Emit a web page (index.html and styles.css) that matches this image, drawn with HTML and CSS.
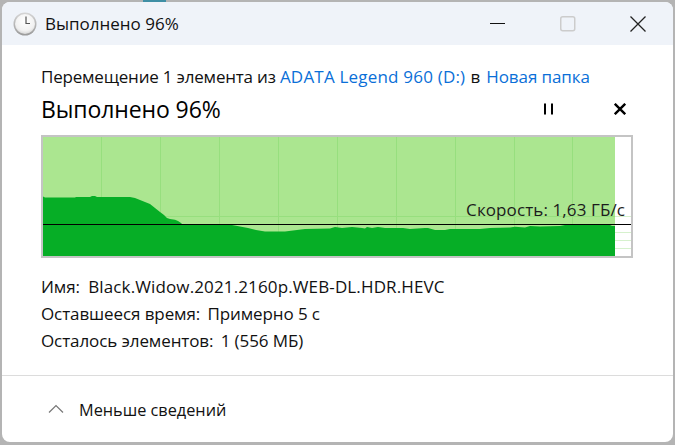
FILE: index.html
```html
<!DOCTYPE html>
<html lang="ru">
    <head>
        <meta charset="utf-8">
        <link rel="stylesheet" href="styles.css">
        <title>Выполнено 96%</title>
    </head>
    <body>
        <div class="window">

            <div class="titlebar">
                <svg class="clock" width="24" height="24" viewBox="0 0 24 24">
                    <defs>
                        <linearGradient id="rim" x1="0" y1="0" x2="0" y2="1">
                            <stop offset="0" stop-color="#d6d6d6"/>
                            <stop offset="1" stop-color="#9a9a9a"/>
                        </linearGradient>
                        <radialGradient id="face" cx="0.5" cy="0.35" r="0.7">
                            <stop offset="0" stop-color="#ffffff"/>
                            <stop offset="0.7" stop-color="#f1f1f1"/>
                            <stop offset="1" stop-color="#cfcfcf"/>
                        </radialGradient>
                    </defs>
                    <circle cx="12" cy="12" r="11.5" fill="url(#rim)"/>
                    <circle cx="12" cy="12" r="10" fill="url(#face)"/>
                    <path d="M13 4.5V11.5H17" fill="none" stroke="#555" stroke-width="1.2"/>
                </svg>
                <span class="title">Выполнено 96%</span>
                <div class="controls">
                    <svg width="16" height="16" viewBox="0 0 16 16"><path d="M0 7.5H15" stroke="#111" stroke-width="1"/></svg>
                    <svg width="16" height="16" viewBox="0 0 16 16"><rect x="0.75" y="0.75" width="14" height="14" rx="2" fill="none" stroke="#cccccc" stroke-width="1.5"/></svg>
                    <svg width="16" height="16" viewBox="0 0 16 16"><path d="M0.5 0.5L15.5 15.5M15.5 0.5L0.5 15.5" stroke="#222" stroke-width="1.3"/></svg>
                </div>
            </div>

            <div class="content">
                <p class="from-to">Перемещение 1 элемента из <span class="link latin">ADATA Legend 960 (D:)</span> в <span class="link">Новая папка</span></p>

                <div class="progress-head">
                    <h1>Выполнено 96%</h1>
                    <div class="actions">
                        <svg width="12" height="12" viewBox="0 0 12 12"><path d="M3 0.5V11.5M10 0.5V11.5" stroke="#000" stroke-width="2"/></svg>
                        <svg width="12" height="12" viewBox="0 0 12 12"><path d="M0.8 0.8L11.2 11.2M11.2 0.8L0.8 11.2" stroke="#000" stroke-width="2.4"/></svg>
                    </div>
                </div>

                <div class="chart">
                    <svg width="588" height="119" viewBox="43 137 588 119">
                        <rect x="43" y="137" width="572" height="119" fill="#abe690"/>
                        <path class="grid" d="M101.5 137V256M160.5 137V256M219.5 137V256M278.5 137V256M337.5 137V256M396.5 137V256M455.5 137V256M514.5 137V256M572.5 137V256M43 216.5H615"/>
                        <path class="grid-empty" d="M615 216.5H631M615 232.5H631M615 240.5H631M615 248.5H631"/>
                        <path class="speed" d="M43 196.5L45 197.5H75L76 197H90L92 196H95L97 197H130L135 198L140 200L145 202L150 204L155 208L160 212L164 215L167 218L170 219L175 219.7L178 221L181 223L183 225H232L240 226.5L248 228L256 230L265 231.5H285L297 230L305 229L330 228.5L335 227L342 228L352 227L362 228L365 228.5L367 227L372 228L378 227L385 228H403L410 229L425 228L428 228L435 230H445L450 229H480L490 228L510 227.5L515 226.7L525 227.5L530 226L540 226.5L560 226L565 225H610L612 226H615V256H43Z"/>
                        <path d="M43 224.5H631" stroke="#000" stroke-width="1"/>
                    </svg>
                    <span class="speed-label">Скорость: 1,63 ГБ/с</span>
                </div>

                <ul class="details">
                    <li>Имя: <span class="value latin">Black.Widow.2021.2160p.WEB-DL.HDR.HEVC</span></li>
                    <li>Оставшееся время: <span class="value">Примерно 5 с</span></li>
                    <li>Осталось элементов: <span class="value">1 (556 МБ)</span></li>
                </ul>
            </div>

            <div class="footer">
                <svg width="16" height="10" viewBox="0 0 16 10"><path d="M1 8.5L8 1.5L15 8.5" fill="none" stroke="#777" stroke-width="1.2"/></svg>
                <span>Меньше сведений</span>
            </div>

        </div>
    </body>
</html>
```

FILE: styles.css
```css
html, body {
    margin: 0;
    height: 445px;
    overflow: hidden;
}

body {
    font-family: "Open Sans", "Noto Sans", sans-serif;
    font-size: 17px;
    color: #111;
    background-color: #b4b4b4;
    background-image: linear-gradient(#3f8fa5, #3f8fa5);
    background-size: 23px 2px;
    background-position: 143px 0;
    background-repeat: no-repeat;
}

.window {
    box-sizing: border-box;
    width: 671px;
    height: 440px;
    margin: 2px 0 0 2px;
    display: flex;
    flex-direction: column;
    background: #ffffff;
    border-radius: 8px;
    overflow: hidden;
}

.titlebar {
    height: 43px;
    flex: none;
    display: flex;
    align-items: center;
    background: #eff3f9;
}

.clock {
    margin-left: 11px;
}

.title {
    margin-left: 8px;
}

.controls {
    margin-left: auto;
    margin-right: 27px;
    display: flex;
    gap: 54px;
}

.content {
    flex: 1;
    padding: 0 40px 0 39px;
}

.from-to {
    margin: 21px 0 0 0;
    line-height: 22px;
    letter-spacing: -0.2px;
    white-space: nowrap;
}

.link {
    color: #0a6fd8;
    letter-spacing: -0.1px;
}

.link.latin {
    margin-right: 1px;
    letter-spacing: 0.2px;
}

.link.latin + .link {
    margin-left: 2px;
}

.progress-head {
    display: flex;
    align-items: center;
    justify-content: space-between;
    height: 33px;
    margin-top: 4px;
}

h1 {
    margin: 0;
    font-size: 23px;
    font-weight: normal;
    letter-spacing: -0.1px;
    color: #000;
}

.actions {
    display: flex;
    gap: 60px;
    margin-right: 7px;
}

.chart {
    position: relative;
    width: 588px;
    height: 119px;
    margin: 10px 0 0 0;
    border: 2px solid #c4c4c4;
}

.chart svg {
    display: block;
}

.grid {
    fill: none;
    stroke: #97df7e;
    stroke-width: 1;
}

.grid-empty {
    fill: none;
    stroke: #d6f1cd;
    stroke-width: 1;
}

.speed {
    fill: #06ae26;
}

.speed-label {
    position: absolute;
    right: 6px;
    top: 62px;
    line-height: 22px;
    letter-spacing: 0.1px;
    color: #1c1c1c;
}

.details {
    list-style: none;
    margin: 15px 0 0 0;
    padding: 0;
}

.details li {
    height: 27px;
    line-height: 27px;
    letter-spacing: -0.1px;
}

.value {
    margin-left: 3px;
}

.value.latin {
    margin-left: 4px;
    letter-spacing: 0.13px;
}

.footer {
    height: 67px;
    flex: none;
    box-sizing: border-box;
    border-top: 1px solid #dcdcdc;
    display: flex;
    align-items: center;
    padding: 2px 0 0 46px;
    gap: 15px;
    font-size: 16.3px;
}

.footer svg {
    margin-bottom: 3px;
}
```
